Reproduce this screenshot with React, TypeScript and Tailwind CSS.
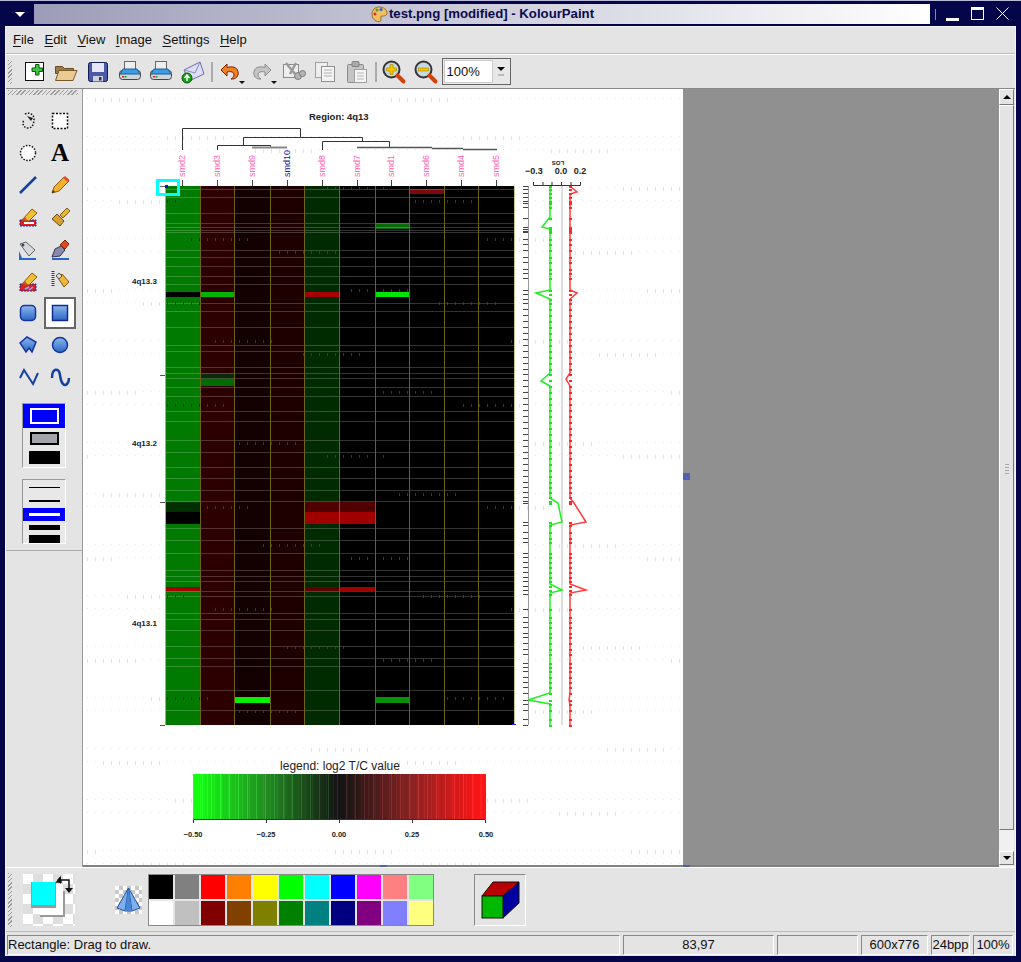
import type { ReactNode } from 'react'

const menus = ['File', 'Edit', 'View', 'Image', 'Settings', 'Help']

const topColors = ['#000000', '#808080', '#ff0000', '#ff8000', '#ffff00', '#00ff00', '#00ffff', '#0000ff', '#ff00ff', '#ff8080', '#80ff80']
const bottomColors = ['#ffffff', '#c0c0c0', '#800000', '#804000', '#808000', '#008000', '#008080', '#000080', '#800080', '#8080ff', '#ffff80']

// heatmap geometry, in page pixels
const colX = [165, 200, 234, 270, 304, 339, 375, 409, 444, 478, 514]
const colFill = ['#007a00', '#2c0000', '#130000', '#1f0000', '#002a00', '#000000', '#000000', '#000000', '#000000', '#000000']
const leafX = [182, 217, 252, 287, 322, 357, 391, 426, 461, 496]
const leafNames = ['smd2', 'smd3', 'smd9', 'smd10', 'smd8', 'smd7', 'smd1', 'smd6', 'smd4', 'smd5']

const cells: [number, number, number, string][] = [
  [7, 189, 5, '#7d0808'],
  [6, 223, 6, '#0a6a0a'],
  [0, 292, 5, '#000000'],
  [1, 292, 5, '#00b400'],
  [4, 292, 5, '#a80000'],
  [6, 292, 5, '#00e600'],
  [1, 373, 6, '#0a2a0a'],
  [1, 379, 7, '#006c00'],
  [0, 502, 10, '#003000'],
  [0, 512, 12, '#000000'],
  [4, 502, 10, '#500000'],
  [5, 502, 10, '#500000'],
  [4, 512, 12, '#a00000'],
  [5, 512, 12, '#a00000'],
  [0, 587, 4, '#a00000'],
  [4, 587, 4, '#600000'],
  [5, 587, 4, '#a00000'],
  [2, 697, 6, '#00f000'],
  [6, 697, 6, '#0a900a'],
]

const gridLines = [189, 197, 213, 223, 227, 230, 232, 250, 257, 266, 276, 284, 303, 311, 327, 345, 351, 367, 373, 378, 387, 396, 411, 421, 440, 452, 467, 478, 490, 501, 528, 540, 553, 570, 576, 581, 591, 596, 613, 619, 630, 646, 658, 666, 690, 710]

const ticks = [186, 189, 193, 197, 201, 203, 207, 218, 227, 229, 231, 232, 239, 244, 250, 257, 262, 269, 273, 278, 290, 294, 299, 303, 309, 315, 321, 327, 333, 339, 345, 351, 357, 363, 369, 374, 380, 386, 392, 398, 404, 410, 416, 422, 428, 434, 440, 446, 452, 458, 464, 470, 476, 482, 487, 492, 497, 501, 503, 522, 525, 532, 538, 542, 553, 557, 562, 567, 572, 577, 581, 586, 590, 594, 609, 617, 622, 627, 633, 637, 643, 649, 654, 663, 667, 671, 677, 682, 687, 693, 700, 704, 710, 719, 725]

const greenLine = '550,186 550,217 542,227 550,229 550,290 536,293 550,299 550,373 541,381 550,386 550,498 558,503 562,522 550,525 550,584 562,590 550,593 550,693 528,700 550,704 550,725'
const redLine = '570,186 577,192 570,194 570,290 577,293 570,299 570,373 566,379 570,386 570,498 574,503 586,522 570,525 570,584 586,590 570,593 570,693 569,700 570,704 570,725'

function pinkRows() {
  const marks: { x: number; y: number; h: number; c: string }[] = []
  for (let r = 0; r < 16; r++) {
    for (const dy of [0, 13]) {
      const y = 85 + r * 51 + dy
      for (let x = 87; x < 681; x += 8) {
        const k = (x + r * 136 + dy * 11) % 296
        const tall = dy === 0 ? k < 64 : k > 232
        marks.push({ x, y, h: tall ? 4 : 1, c: tall ? '#ffd0ff' : '#ffd8ff' })
      }
    }
  }
  return marks
}

function Plot() {
  const marks = pinkRows()
  const stripes = Array.from({ length: 293 }, (_, i) => {
    const t = (i - 146) / 146
    const a = Math.abs(t)
    const bump = (i * 7) % 9 === 0 ? 34 : (i * 5) % 7 === 0 ? 14 : 0
    const main = Math.min(255, Math.round(16 + 244 * a) + bump)
    const low = Math.round(20 + 14 * (1 - Math.abs(a - 0.5) * 2)) + Math.round(bump / 2)
    return { x: 193 + i, fill: t < 0 ? `rgb(${low},${main},${low})` : `rgb(${main},${low},${low})` }
  })
  return (
    <svg width={600} height={776} viewBox="83 89 600 776" className="block" fontFamily="'Liberation Sans', sans-serif">
      <rect x={83} y={89} width={600} height={776} fill="#ffffff" />
      {marks.map((m, i) => (
        <rect key={i} x={m.x} y={m.y} width={1} height={m.h} fill={m.c} />
      ))}
      <text x={309} y={120} fontSize={9.5} fontWeight="bold" fill="#222222">Region: 4q13</text>

      {/* dendrogram */}
      <g fill="none" stroke="#333333" strokeWidth={1}>
        <path d="M182.5 150V128.5H300.5V137" />
        <path d="M243.5 145V137.5H362.5V141" />
        <path d="M217.5 150V145.5H270.5V147" />
        <path d="M322.5 150V141.5H389.5V147" />
        <path d="M357 147.5H432M432 148.5H463M463 149.5H497" strokeWidth={1.4} stroke="#555555" />
        <path d="M252 147.5H287" stroke="#888888" strokeWidth={2} />
      </g>
      {leafX.map((x, i) => (
        <g key={x}>
          <text
            x={x + 3}
            y={177}
            transform={`rotate(-90 ${x + 3} 177)`}
            fontSize={9}
            fill={i === 3 ? '#20209a' : '#ff66b4'}
          >
            {leafNames[i]}
          </text>
          <rect x={x} y={180} width={1} height={6} fill="#444444" />
        </g>
      ))}

      {/* heatmap */}
      {colFill.map((fill, i) => (
        <rect key={i} x={colX[i]} y={186} width={colX[i + 1] - colX[i]} height={539} fill={fill} />
      ))}
      {cells.map(([c, y, h, fill], i) => (
        <rect key={i} x={colX[c]} y={y} width={colX[c + 1] - colX[c]} height={h} fill={fill} />
      ))}
      {gridLines.map((y) => (
        <rect key={y} x={165} y={y} width={349} height={1} fill="#ffffff" opacity={0.2} />
      ))}
      {marks
        .filter((m) => m.h > 1 && m.x > 165 && m.x < 514 && m.y > 186 && m.y < 725)
        .map((m, i) => (
          <rect key={i} x={m.x} y={m.y} width={1} height={3} fill={m.x < 200 ? '#003000' : '#3c5a00'} opacity={0.75} />
        ))}
      {colX.slice(0, -1).map((x, i) => (
        <rect key={x} x={x} y={186} width={1} height={539} fill={i === 0 ? '#a8b060' : '#6a6414'} />
      ))}
      <rect x={514} y={186} width={1} height={539} fill="#c8c890" />
      <rect x={512} y={724} width={4} height={1} fill="#2020e0" />

      {/* left bracket */}
      <rect x={160} y={186} width={5} height={1} fill="#666666" />
      <rect x={160} y={375} width={5} height={1} fill="#555555" />
      <rect x={160} y={502} width={5} height={1} fill="#555555" />
      <rect x={160} y={725} width={5} height={1} fill="#555555" />
      <text x={132} y={284} fontSize={8} fontWeight="bold" fill="#222222">4q13.3</text>
      <text x={132} y={446} fontSize={8} fontWeight="bold" fill="#222222">4q13.2</text>
      <text x={132} y={626} fontSize={8} fontWeight="bold" fill="#222222">4q13.1</text>

      {/* selection being drawn */}
      <rect x={157.5} y={180.5} width={21} height={14} fill="none" stroke="#00ffff" strokeWidth={3} />
      <rect x={165} y={185} width={3} height={3} fill="#1010e0" />

      {/* LOS profile */}
      <rect x={528} y={186} width={1} height={539} fill="#999999" />
      {ticks.map((y) => (
        <rect key={y} x={523} y={y} width={5} height={1} fill="#444444" />
      ))}
      <rect x={561} y={186} width={2} height={539} fill="#dddddd" />
      <polyline points={greenLine} fill="none" stroke="#22ee22" strokeWidth={1.5} />
      <polyline points={redLine} fill="none" stroke="#ff3c3c" strokeWidth={1.5} />
      {ticks.map((y) => (
        <g key={y}>
          <rect x={549} y={y} width={3} height={2} fill="#20e020" />
          <rect x={569} y={y} width={3} height={2} fill="#ff2828" />
        </g>
      ))}
      <path d="M533.5 182V185.5H580.5V182M543 182V185M552 182V185M561.5 182V185M571 182V185" fill="none" stroke="#333333" />
      <text x={534} y={174} textAnchor="middle" fontSize={9} fontWeight="bold" fill="#222222">−0.3</text>
      <text x={561} y={174} textAnchor="middle" fontSize={9} fontWeight="bold" fill="#222222">0.0</text>
      <text x={580} y={174} textAnchor="middle" fontSize={9} fontWeight="bold" fill="#222222">0.2</text>
      <text x={558} y={161} transform="rotate(180 558 161)" textAnchor="middle" fontSize={6} fontWeight="bold" fill="#222222">LOS</text>

      {/* legend */}
      <text x={340} y={770} textAnchor="middle" fontSize={12} fill="#222222">legend: log2 T/C value</text>
      {stripes.map((s) => (
        <rect key={s.x} x={s.x} y={774} width={1} height={45} fill={s.fill} />
      ))}
      <path d="M193.5 823V819.5H485.5V823M266.5 819V823M339.5 819V823M412.5 819V823" fill="none" stroke="#333333" />
      {['−0.50', '−0.25', '0.00', '0.25', '0.50'].map((label, i) => (
        <text key={label} x={[193, 266, 339, 412, 486][i]} y={837} textAnchor="middle" fontSize={7.5} fontWeight="bold" fill="#222222">
          {label}
        </text>
      ))}
    </svg>
  )
}

function Glyph({ children, size = 24 }: { children: ReactNode; size?: number }) {
  return (
    <svg width={size} height={size} viewBox={`0 0 ${size} ${size}`} className="block overflow-visible">
      {children}
    </svg>
  )
}

function Handle({ className }: { className: string }) {
  return (
    <div className={`bg-[repeating-linear-gradient(135deg,#9a9a9a_0px,#9a9a9a_1px,#e4e4e4_1px,#e4e4e4_3px)] ${className}`} />
  )
}

const toolbarLeft: ReactNode[] = [
  <Glyph key="new">
    <rect x="2.5" y="2.5" width="18" height="18" fill="#ffffff" stroke="#111111" />
    <path d="M12.500 4.500h3.500v3.500h3.500v3.500H16V15h-3.500v-3.500H9V8h3.500z" fill="#44c044" stroke="#0c5a0c" />
  </Glyph>,
  <Glyph key="open">
    <path d="M1.500 6.500h7l2 2h9v5H1.500z" fill="#9a7a48" stroke="#6a4c20" />
    <path d="M1.500 20.500 5 10.500h18l-4 10z" fill="#eccb92" stroke="#7a5a26" />
  </Glyph>,
  <Glyph key="save">
    <rect x="2.500" y="2.500" width="19" height="19" rx="2" fill="#4a5aa8" stroke="#121c58" />
    <rect x="6" y="3" width="12" height="9" fill="#e6e6f6" />
    <rect x="7" y="16" width="10" height="5.500" fill="#d0d0dc" />
    <rect x="13" y="17" width="2.500" height="3.500" fill="#30305a" />
  </Glyph>,
  <Printer key="print" />,
  <Printer key="preview" />,
  <Glyph key="mail">
    <path d="M3 10 19 2l4 12-15 7z" fill="#dedef6" stroke="#6c6cae" />
    <path d="M3 10l11 3 5-11" fill="none" stroke="#8a8ac4" />
    <circle cx="6" cy="18" r="5" fill="#14a014" stroke="#0a5a0a" />
    <path d="M6 15v6M3.500 18 6 15l2.500 3" fill="none" stroke="#ffffff" strokeWidth="1.500" />
  </Glyph>,
]

function Printer() {
  return (
    <Glyph>
      <rect x="6.500" y="1.500" width="11" height="9" fill="#eeeeee" stroke="#666666" />
      <rect x="1.500" y="10.500" width="21" height="9" rx="3" fill="#cfd3da" stroke="#444444" />
      <path d="M5 9h14l3 5H2z" fill="#3a9ce2" stroke="#1e5e96" />
      <rect x="4" y="16" width="2" height="1.500" fill="#d02020" />
      <rect x="6.500" y="16" width="2" height="1.500" fill="#20a020" />
    </Glyph>
  )
}

function ArrowIcon({ flip, fill, stroke, tip }: { flip?: boolean; fill: string; stroke: string; tip: string }) {
  return (
    <Glyph>
      <path
        transform={flip ? 'translate(24 0) scale(-1 1)' : undefined}
        d="M9 4 3 10l6 6v-4c4-1 7 0 7 3 0 2-1.500 3-3 4 5 .5 8-3 7-7.500C19 7 14 6 9 7.500z"
        fill={fill}
        stroke={stroke}
      />
      <path d="M21 21h6l-3 3z" fill={tip} />
    </Glyph>
  )
}

function ZoomIcon({ plus }: { plus?: boolean }) {
  return (
    <Glyph>
      <circle cx="9.500" cy="9.500" r="8" fill="#c6d8e6" stroke="#333333" strokeWidth="2" />
      <path d="M15.500 15.500l6 6" stroke="#d2440f" strokeWidth="4" strokeLinecap="round" />
      {plus ? (
        <path d="M8 4.500h3V8h3.500v3H11v3.500H8V11H4.500V8H8z" fill="#f4c400" stroke="#9a7a00" strokeWidth=".5" />
      ) : (
        <rect x="4.500" y="8" width="10" height="3" fill="#f4c400" stroke="#9a7a00" strokeWidth=".5" />
      )}
    </Glyph>
  )
}

function Toolbar() {
  return (
    <div className="flex h-[34px] items-center border-t border-white">
      <Handle className="ml-[2px] mr-[7px] h-[24px] w-[4px]" />
      {toolbarLeft.map((icon, i) => (
        <div key={i} className="flex w-[31.6px] justify-center">{icon}</div>
      ))}
      <div className="ml-[2px] mr-[2px] h-[20px] w-[2px] bg-[#aaaaaa]" />
      <div className="flex w-[31.6px] justify-center">
        <ArrowIcon fill="#f08022" stroke="#7a2000" tip="#111111" />
      </div>
      <div className="flex w-[31.6px] justify-center">
        <ArrowIcon flip fill="#c4c4c4" stroke="#8c8c8c" tip="#111111" />
      </div>
      <div className="flex w-[31.6px] justify-center">
        <Glyph>
          <rect x="1.500" y="4.500" width="15" height="13" fill="#eeeeee" stroke="#8c8c8c" />
          <path d="M4 3l9 11M14 3 8 14" stroke="#9a9a9a" strokeWidth="2.500" />
          <circle cx="16" cy="16" r="3.500" fill="#b4b4b4" stroke="#7c7c7c" />
          <circle cx="20.500" cy="13.500" r="3" fill="#b4b4b4" stroke="#7c7c7c" />
        </Glyph>
      </div>
      <div className="flex w-[31.6px] justify-center">
        <Glyph>
          <rect x="2.500" y="2.500" width="12" height="15" fill="#eeeeee" stroke="#a0a0a0" />
          <rect x="8.500" y="6.500" width="13" height="15" fill="#f4f4f4" stroke="#909090" />
          <path d="M11 10h8M11 13h8M11 16h8" stroke="#b0b0b0" />
        </Glyph>
      </div>
      <div className="flex w-[31.6px] justify-center">
        <Glyph>
          <rect x="2.500" y="4.500" width="16" height="18" rx="1" fill="#c4c4c4" stroke="#8c8c8c" />
          <rect x="7" y="1.500" width="7" height="5" rx="1" fill="#aaaaaa" stroke="#808080" />
          <rect x="9.500" y="9.500" width="12" height="13" fill="#f4f4f4" stroke="#a0a0a0" />
          <path d="M12 13h7M12 16h7M12 19h7" stroke="#b4b4b4" />
        </Glyph>
      </div>
      <div className="ml-[2px] h-[20px] w-[2px] bg-[#aaaaaa]" />
      <div className="ml-[1px] flex w-[32px] justify-center"><ZoomIcon plus /></div>
      <div className="flex w-[32px] justify-center"><ZoomIcon /></div>
      <div className="flex h-[27px] w-[69px] border border-[#666666] bg-[#e8e8e8] p-[1px]">
        <div className="flex w-[49px] items-center border border-[#cccccc] bg-white pl-[2px] text-[13px] text-[#111111]">100%</div>
        <div className="flex flex-1 flex-col items-center justify-center gap-[3px]">
          <div className="h-0 w-0 border-x-[4px] border-t-[4px] border-x-transparent border-t-black" />
          <div className="h-[2px] w-[6px] bg-[#bbbbbb]" />
        </div>
      </div>
    </div>
  )
}

const tools: ReactNode[] = [
  <Glyph key="lasso" size={22}>
    <path d="M8 4c4-2 9 0 9 5 0 4-1 9-6 9-5 0-6-5-4-8" fill="none" stroke="#111111" strokeWidth="1.500" strokeDasharray="1.500 1.500" />
    <path d="M10 6l6 2-2 3z" fill="#222222" />
  </Glyph>,
  <Glyph key="rect" size={22}>
    <rect x="3.500" y="3.500" width="15" height="15" fill="#ffffff" stroke="#111111" strokeWidth="1.500" strokeDasharray="2 1.500" />
  </Glyph>,
  <Glyph key="ellipse" size={22}>
    <circle cx="11" cy="11" r="7.500" fill="#ffffff" stroke="#111111" strokeWidth="1.500" strokeDasharray="1.500 1.500" />
  </Glyph>,
  <span key="text" className="font-['Liberation_Serif',serif] text-[25px] leading-[22px] font-bold text-black">A</span>,
  <Glyph key="line" size={22}>
    <path d="M3 19 19 3" stroke="#1440a0" strokeWidth="2.500" />
  </Glyph>,
  <Glyph key="pencil" size={22}>
    <path d="M3 19l2-6L15 3l5 4-10 10z" fill="#f0b030" stroke="#8a5a10" />
    <path d="M14 4l5 4 1.500-2L16 2z" fill="#e04a20" />
    <path d="M3 19l1-3 2 2z" fill="#333333" />
  </Glyph>,
  <Glyph key="eraser" size={22}>
    <rect x="3" y="14" width="16" height="6" fill="#e02020" stroke="#1a2ab0" strokeDasharray="2 1" />
    <path d="M5 14l10-11 5 4-8 8z" fill="#f0c030" stroke="#8a5a10" />
    <path d="M5 14l3-3 3 4z" fill="#e04a20" />
    <rect x="7" y="16" width="10" height="2" fill="#ffffff" />
  </Glyph>,
  <Glyph key="brush" size={22}>
    <path d="M3 13l5-5 7 7-4 5z" fill="#d8a030" stroke="#6a4a10" />
    <path d="M11 9l7-7 3 3-7 7z" fill="#eab43c" stroke="#7a5a10" />
  </Glyph>,
  <Glyph key="fill" size={22}>
    <path d="M2 20h17v2H2zM2 13v7h3z" fill="#2a66c8" />
    <path d="M3 6l6-2 9 8-6 6z" fill="#d8d8de" stroke="#666666" />
    <circle cx="6" cy="7" r="1.500" fill="#444466" />
  </Glyph>,
  <Glyph key="pick" size={22}>
    <path d="M3 20h17v2H3z" fill="#2a66c8" />
    <path d="M3 19l3-8 6-3 4 4-5 6z" fill="#8a8aa8" stroke="#333355" />
    <path d="M11 7l5-5 4 4-4 5z" fill="#e04a20" stroke="#8a2000" />
  </Glyph>,
  <Glyph key="ceraser" size={22}>
    <rect x="3" y="14" width="16" height="7" fill="#e02020" stroke="#1a2ab0" strokeDasharray="2 1" />
    <path d="M5 14l10-11 5 4-8 8z" fill="#f0c030" stroke="#8a5a10" />
    <path d="M5 14l3-3 3 4z" fill="#e04a20" />
    <path d="M8 19l4-2M12 20l4-3" stroke="#8ab0ff" strokeWidth="1.500" />
  </Glyph>,
  <Glyph key="spray" size={22}>
    <path d="M4 1v16" stroke="#2233cc" strokeWidth="3" strokeDasharray="1 1" />
    <path d="M9 8l4-4 7 8-5 5z" fill="#efb83c" stroke="#7a5a10" />
    <path d="M7 6l3-3 3 3-3 3z" fill="#d8d8d8" stroke="#555555" />
  </Glyph>,
  <Glyph key="rrect" size={22}>
    <defs>
      <linearGradient id="toolBlue" x1="0" y1="0" x2="0" y2="1">
        <stop offset="0" stopColor="#8cb8ee" />
        <stop offset="1" stopColor="#2a66c4" />
      </linearGradient>
    </defs>
    <rect x="3.500" y="3.500" width="15" height="15" rx="4" fill="url(#toolBlue)" stroke="#1434a0" strokeWidth="1.500" />
  </Glyph>,
  <Glyph key="srect" size={22}>
    <rect x="3.500" y="3.500" width="15" height="15" fill="url(#toolBlue)" stroke="#102c90" strokeWidth="1.500" />
  </Glyph>,
  <Glyph key="poly" size={22}>
    <path d="M3 9l7-6 9 5-4 10-3-4-3 4z" fill="url(#toolBlue)" stroke="#1434a0" strokeWidth="1.500" />
  </Glyph>,
  <Glyph key="circle" size={22}>
    <circle cx="11" cy="11" r="7.500" fill="url(#toolBlue)" stroke="#1434a0" strokeWidth="1.500" />
  </Glyph>,
  <Glyph key="polyline" size={22}>
    <path d="M3 12 7 4l9 14 5-11" fill="none" stroke="#1440a0" strokeWidth="2" />
  </Glyph>,
  <Glyph key="curve" size={22}>
    <path d="M3 12C3 2 10 1 11 9c1 8 4 12 7 9 2-2 2-4 2-6" fill="none" stroke="#1440a0" strokeWidth="2.500" />
  </Glyph>,
]

function ToolPanel() {
  return (
    <div className="flex w-[77px] shrink-0 flex-col border-r border-[#999999]">
      <Handle className="ml-[2px] mt-[1px] h-[5px] w-[70px]" />
      <div className="ml-[6px] mt-[10px] grid w-[64px] grid-cols-2">
        {tools.map((tool, i) => (
          <div
            key={i}
            className={`flex h-[32px] w-[32px] items-center justify-center ${i === 13 ? 'border-2 border-[#666666] bg-white' : ''}`}
          >
            {tool}
          </div>
        ))}
      </div>
      <div className="ml-[16px] mt-[10px] flex h-[65px] w-[44px] flex-col items-center border border-[#999999] border-r-white border-b-white bg-[#e8e8e8]">
        <div className="flex h-[24px] w-full items-center justify-center bg-[#0000ff]">
          <div className="h-[16px] w-[29px] border-2 border-white bg-[#0000ff]" />
        </div>
        <div className="flex h-[20px] items-center justify-center">
          <div className="h-[13px] w-[29px] border-2 border-black bg-[#a4a4ac]" />
        </div>
        <div className="flex h-[19px] items-center justify-center">
          <div className="h-[13px] w-[31px] bg-black" />
        </div>
      </div>
      <div className="ml-[16px] mt-[11px] flex h-[65px] w-[44px] flex-col items-center border border-[#999999] border-r-white border-b-white bg-[#e8e8e8]">
        <div className="flex h-[14px] w-full items-center justify-center"><div className="h-[1px] w-[31px] bg-black" /></div>
        <div className="flex h-[14px] w-full items-center justify-center"><div className="h-[2px] w-[31px] bg-black" /></div>
        <div className="flex h-[13px] w-full items-center justify-center bg-[#0000ff]"><div className="h-[3px] w-[31px] bg-white" /></div>
        <div className="flex h-[13px] w-full items-center justify-center"><div className="h-[5px] w-[31px] bg-black" /></div>
        <div className="flex h-[9px] w-full items-center justify-center"><div className="h-[8px] w-[31px] bg-black" /></div>
      </div>
      <div className="mt-[6px] h-[1px] w-full bg-[#aaaaaa]" />
    </div>
  )
}

function ScrollBar() {
  return (
    <div className="flex w-[16px] shrink-0 flex-col border-r border-[#e4e4e4] bg-[#f0f0f0]">
      <div className="flex h-[16px] items-center justify-center border border-[#777777] border-t-white border-l-white bg-[#e4e4e4]">
        <div className="h-0 w-0 border-x-[4px] border-b-[4px] border-x-transparent border-b-black" />
      </div>
      <div className="flex h-[725px] items-center justify-center border border-[#777777] border-t-white border-l-white bg-[#e4e4e4]">
        <div className="h-[12px] w-[4px] bg-[repeating-linear-gradient(0deg,#aaaaaa_0px,#aaaaaa_1px,transparent_1px,transparent_3px)]" />
      </div>
      <div className="flex-1" />
      <div className="mb-[2px] flex h-[14px] items-center justify-center border border-[#777777] border-t-white border-l-white bg-[#e4e4e4]">
        <div className="h-0 w-0 border-x-[4px] border-t-[4px] border-x-transparent border-t-black" />
      </div>
    </div>
  )
}

function ColorBox() {
  return (
    <svg width={52} height={52} viewBox="0 0 52 52" className="block shrink-0">
      <defs>
        <pattern id="chk" width="20" height="20" patternUnits="userSpaceOnUse">
          <rect width="20" height="20" fill="#ffffff" />
          <rect x="10" width="10" height="10" fill="#dedede" />
          <rect y="10" width="10" height="10" fill="#dedede" />
        </pattern>
        <pattern id="chkSmall" width="8" height="8" patternUnits="userSpaceOnUse">
          <rect width="8" height="8" fill="#ffffff" />
          <rect x="4" width="4" height="4" fill="#c8c8c8" />
          <rect y="4" width="4" height="4" fill="#c8c8c8" />
        </pattern>
      </defs>
      <rect width="52" height="52" fill="url(#chk)" />
      <rect x="17" y="17" width="25" height="26" fill="#9a9a9a" />
      <rect x="17" y="17" width="23" height="24" fill="#ffffff" />
      <rect x="8" y="8" width="25" height="26" fill="#9a9a9a" />
      <rect x="9" y="8" width="23" height="23" fill="#00ffff" />
      <path d="M38 8h-4l3-4zM37 6h9v9" fill="none" stroke="#111111" strokeWidth="1.500" />
      <path d="M34 6l4-4v8zM42 14h8l-4 5z" fill="#111111" />
    </svg>
  )
}

function BottomPanel() {
  return (
    <div className="flex h-[64px] items-center border-t border-white">
      <Handle className="ml-[2px] h-[54px] w-[4px]" />
      <div className="ml-[11px]"><ColorBox /></div>
      <svg width={27} height={28} viewBox="0 0 27 28" className="ml-[40px] block shrink-0">
        <rect width="27" height="28" fill="url(#chkSmall)" />
        <path d="M13.500 2 2 22l8 3h7l8-3z" fill="#7eb0ea" stroke="#1a4ea8" />
        <path d="M13.500 2 10 25M13.500 2 17 25" stroke="#1a4ea8" fill="none" />
        <path d="M13.500 2 10 25h7z" fill="#4a84d4" />
      </svg>
      <div className="ml-[6px] grid h-[52px] w-[286px] shrink-0 grid-cols-11 gap-[2px] border border-[#888888] bg-[#e4e4e4]">
        {[...topColors, ...bottomColors].map((c, i) => (
          <div key={i} className="h-[24px] w-[24px]" style={{ backgroundColor: c }} />
        ))}
      </div>
      <div className="ml-[40px] h-[52px] w-[52px] shrink-0 border border-[#888888] border-r-white border-b-white">
        <svg width={50} height={50} viewBox="0 0 50 50" className="block">
          <path d="M7 21 18 7h26L28 21z" fill="#b80000" stroke="#111111" />
          <path d="M28 21 44 7v21L28 43z" fill="#0000a0" stroke="#111111" />
          <rect x="7" y="21" width="21" height="22" fill="#00b800" stroke="#111111" />
        </svg>
      </div>
    </div>
  )
}

function StatusCell({ className, children }: { className: string; children?: ReactNode }) {
  return (
    <div className={`flex h-[20px] items-center border border-[#888888] border-r-white border-b-white ${className}`}>
      {children}
    </div>
  )
}

export default function App() {
  return (
    <div className="flex h-[962px] w-[1021px] flex-col border-t border-[#b8b8d8] bg-[#05054a] font-['Liberation_Sans',sans-serif] text-[13px] text-[#111111]">
      {/* title bar */}
      <div className="flex h-[25px] shrink-0 pl-[5px] pt-[3px]">
        <div className="flex h-[20px] w-[29px] items-center justify-center">
          <div className="h-0 w-0 border-x-[5px] border-t-[5px] border-x-transparent border-t-white" />
        </div>
        <div className="flex h-[20px] w-[896px] items-center justify-center gap-[1px] bg-[linear-gradient(90deg,#9c9cb8,#ffffff)] pl-[1px]">
          <svg width={17} height={17} viewBox="0 0 17 17" className="block shrink-0">
            <path d="M8 1c5 0 8 3 8 6s-3 3-5 3-1 2-1 4-3 2-5 1S1 12 1 8s3-7 7-7z" fill="#f0c060" stroke="#9a7020" />
            <circle cx="6" cy="4" r="1.500" fill="#40a040" />
            <circle cx="10" cy="3.500" r="1.500" fill="#3060d0" />
            <circle cx="4" cy="8" r="1.500" fill="#d03030" />
          </svg>
          <span className="text-[13.2px] leading-none font-bold text-[#0a0a50]">test.png [modified] - KolourPaint</span>
        </div>
        <div className="ml-[5px] mt-[5px] h-[11px] w-[1px] bg-[#8888a0]" />
        <div className="ml-[10px] mt-[14px] h-[3px] w-[13px] bg-white" />
        <div className="ml-[12px] mt-[3px] h-[13px] w-[13px] border border-t-[3px] border-white" />
        <svg width={13} height={13} viewBox="0 0 13 13" className="ml-[12px] mt-[3px] block">
          <path d="M.5.500l12 12M12.500.500l-12 12" stroke="#ffffff" />
        </svg>
      </div>

      {/* client area */}
      <div className="ml-[5px] flex h-[930px] w-[1011px] flex-col border-x border-t border-[#f4f4f4] bg-[#e4e4e4]">
        <div className="flex h-[27px] shrink-0 items-center gap-[10.5px] border-b border-[#bbbbbb] pl-[7px]">
          {menus.map((m) => (
            <span key={m}>
              <span className="underline underline-offset-2">{m[0]}</span>
              {m.slice(1)}
            </span>
          ))}
        </div>
        <Toolbar />
        <div className="flex h-[779px] shrink-0 border-t border-[#888888]">
          <ToolPanel />
          <div className="relative flex-1 border-b-2 border-[#808080] bg-[#909090]">
            <Plot />
            <div className="absolute left-[600px] top-[384px] h-[7px] w-[7px] bg-[#5060b0]" />
            <div className="absolute bottom-[-2px] left-[297px] h-[2px] w-[7px] bg-[#5060b0]" />
            <div className="absolute bottom-[-2px] left-[600px] h-[2px] w-[7px] bg-[#5060b0]" />
          </div>
          <ScrollBar />
        </div>
        <BottomPanel />
        <div className="flex h-[24px] shrink-0 items-center gap-[3px] border-t border-[#bbbbbb] pl-[1px] pt-[2px]">
          <StatusCell className="w-[613px]">Rectangle: Drag to draw.</StatusCell>
          <StatusCell className="w-[151px] justify-center">83,97</StatusCell>
          <StatusCell className="w-[81px]" />
          <StatusCell className="w-[67px] justify-center">600x776</StatusCell>
          <StatusCell className="w-[39px] justify-center">24bpp</StatusCell>
          <StatusCell className="w-[40px] justify-center">100%</StatusCell>
        </div>
      </div>
    </div>
  )
}
